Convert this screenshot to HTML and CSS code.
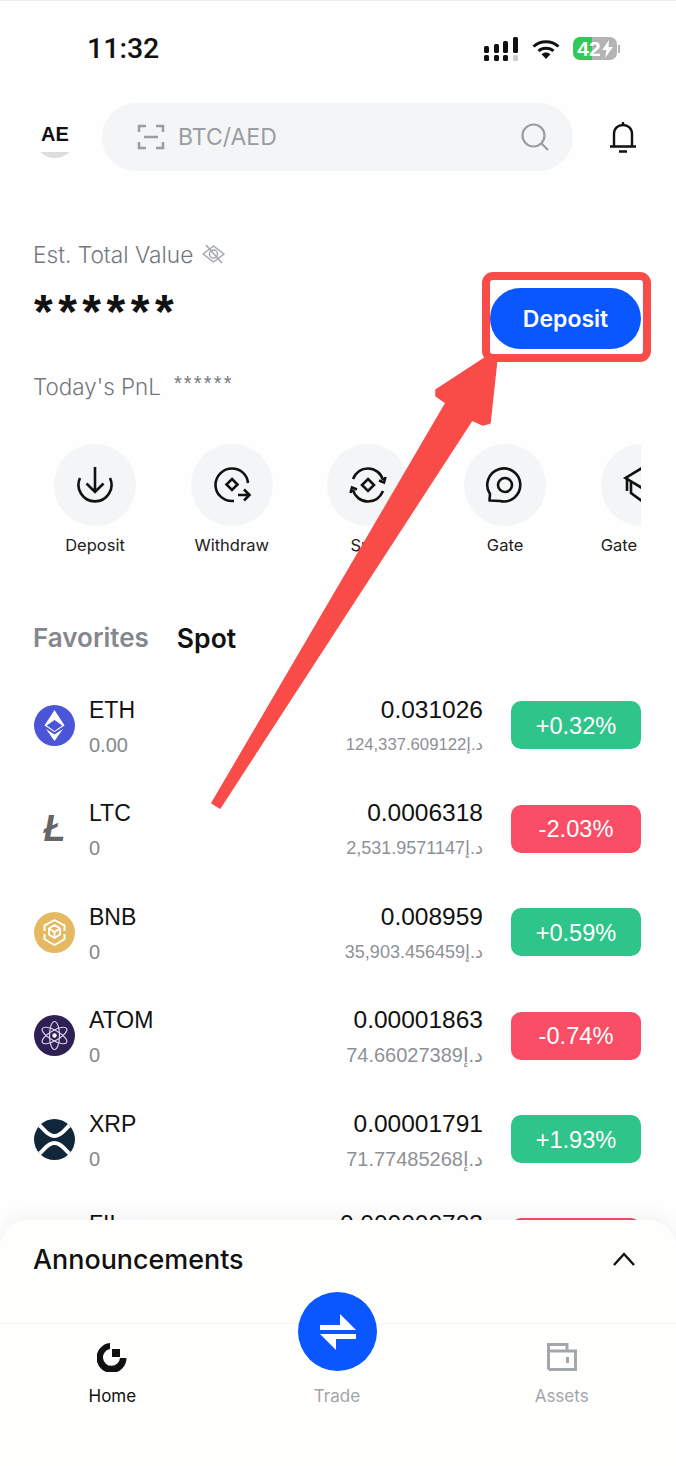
FILE: index.html
```html
<!DOCTYPE html>
<html lang="en">
<head>
    <meta charset="UTF-8">
    <meta name="viewport" content="width=device-width, initial-scale=1.0">
    <title>Home</title>
    <link rel="stylesheet" href="styles.css">
</head>
<body>
<div class="screen">

    <div class="status-bar">
        <span class="time">11:32</span>
        <div class="status-icons">
            <svg class="signal" width="36" height="24" viewBox="0 0 36 24">
                <g fill="#111">
                    <rect x="1" y="9" width="5" height="7" rx="1.5"/>
                    <rect x="11" y="7" width="5" height="9" rx="1.5"/>
                    <rect x="20" y="4" width="5" height="12" rx="1.5"/>
                    <rect x="30" y="0" width="5" height="16" rx="1.5"/>
                    <rect x="1" y="18" width="5" height="6" rx="1.5"/>
                    <rect x="11" y="18" width="5" height="6" rx="1.5"/>
                    <rect x="20" y="18" width="5" height="6" rx="1.5"/>
                </g>
                <rect x="30" y="18" width="5" height="6" rx="1.5" fill="#ccc"/>
            </svg>
            <svg class="wifi" width="28" height="20" viewBox="0 0 28 20">
                <path d="M1.5 7.5C8.5 1 19.5 1 26.5 7.5" fill="none" stroke="#111" stroke-width="3"/>
                <path d="M6.5 12C10.5 8.4 17.5 8.4 21.5 12" fill="none" stroke="#111" stroke-width="3"/>
                <path d="M9.5 15.2C12.2 12.8 15.8 12.8 18.5 15.2L14 20Z" fill="#111"/>
            </svg>
            <div class="battery">
                <span class="battery-text">42</span>
                <svg width="11" height="18" viewBox="0 0 11 18"><path d="M7 0L0 10H4.5L3 18L11 7H6.5Z" fill="#fff"/></svg>
            </div>
            <span class="battery-nub"></span>
        </div>
    </div>

    <div class="search-row">
        <div class="avatar"><span>AE</span></div>
        <div class="search-box">
            <svg width="28" height="26" viewBox="0 0 28 26" fill="none" stroke="#9a9da1" stroke-width="2.5">
                <path d="M9 2H2V8M19 2H26V8M9 24H2V18M19 24H26V18M7 13H21"/>
            </svg>
            <span class="search-text">BTC/AED</span>
            <svg class="search-icon" width="28" height="28" viewBox="0 0 28 28" fill="none" stroke="#9a9da1" stroke-width="2.2">
                <circle cx="12.5" cy="12.5" r="11"/>
                <path d="M20.5 20.5L27 27"/>
            </svg>
        </div>
        <svg class="bell" width="28" height="32" viewBox="0 0 28 32" fill="none" stroke="#111" stroke-width="2.4">
            <path d="M14 1V4M5 25V13C5 7.5 9 4 14 4S23 7.5 23 13V25M1 25.5H27M10 30.5H18"/>
        </svg>
    </div>

    <div class="summary">
        <div class="summary-label">
            Est. Total Value
            <svg width="23" height="20" viewBox="0 0 23 20" fill="none" stroke="#a3a6aa" stroke-width="1.5">
                <path d="M1 10L11.500 2L22 10L11.500 18Z" stroke-linejoin="round"/>
                <circle cx="11.5" cy="10" r="4"/>
                <path d="M4 1L20 19"/>
            </svg>
        </div>
        <div class="summary-row">
            <span class="summary-value">******</span>
            <button type="button" class="deposit-button">Deposit</button>
        </div>
        <div class="pnl">
            <span>Today's PnL</span>
            <span class="pnl-value">******</span>
        </div>
    </div>

    <div class="actions">
        <div class="action">
            <div class="action-circle">
                <svg width="40" height="40" viewBox="0 0 40 40" fill="none" stroke="#111" stroke-width="2.6">
                    <path d="M5 13A16.500 16.500 0 1 0 35 13"/>
                    <path d="M20 2V27M11.500 18.500L20 27L28.500 18.500"/>
                </svg>
            </div>
            <span class="action-label">Deposit</span>
        </div>
        <div class="action">
            <div class="action-circle">
                <svg width="40" height="40" viewBox="0 0 40 40" fill="none" stroke="#111" stroke-width="2.6">
                    <path d="M36 18C35 9 28 3.500 20 3.500C11 3.500 3.500 11 3.500 20S11 36 20 36H22"/>
                    <path d="M20 14L25.500 19.500L20 25L14.500 19.500Z"/>
                    <path d="M26 30H37M32 24.500L37.500 30L32 35.500"/>
                </svg>
            </div>
            <span class="action-label">Withdraw</span>
        </div>
        <div class="action">
            <div class="action-circle">
                <svg width="40" height="40" viewBox="0 0 40 40" fill="none" stroke="#111" stroke-width="2.6">
                    <path d="M5 14C8 7 14 3.500 20 3.500C27 3.500 33 8 35 15M31 15.500L36 17.500L37.500 12"/>
                    <path d="M35 26C32 33 26 36.500 20 36.500C13 36.500 7 32 5 25M9 24.500L4 22.500L2.500 28"/>
                    <path d="M20 14L26 20L20 26L14 20Z"/>
                </svg>
            </div>
            <span class="action-label">Spot</span>
        </div>
        <div class="action">
            <div class="action-circle">
                <svg width="40" height="40" viewBox="0 0 40 40" fill="none" stroke="#111" stroke-width="2.6">
                    <path d="M5 29A16.500 16.500 0 1 1 15 36L4.500 35.500Z" stroke-linejoin="round"/>
                    <circle cx="20" cy="20" r="7"/>
                </svg>
            </div>
            <span class="action-label">Gate</span>
        </div>
        <div class="action action-cut">
            <div class="action-circle">
                <svg width="40" height="40" viewBox="0 0 40 40" fill="none" stroke="#111" stroke-width="2.6">
                    <path d="M20 3L3.500 13L20 23L36.500 13Z"/>
                    <path d="M5 12V26M9 17V28L20 36L31 28V17"/>
                </svg>
            </div>
            <span class="action-label">Gate</span>
        </div>
    </div>

    <div class="tabs">
        <span class="tab">Favorites</span>
        <span class="tab tab-active">Spot</span>
    </div>

    <div class="market-list">
        <div class="market-row">
            <svg class="coin" width="41" height="41" viewBox="0 0 41 41">
                <circle cx="20.500" cy="20.500" r="20.500" fill="#4a55d8"/>
                <path d="M20.500 5L30.500 20.500L20.500 27L10.500 20.500Z" fill="#fff"/>
                <path d="M20.500 29.500L29 24L20.500 36L12 24Z" fill="#fff"/>
                <path d="M20.500 14.500L29 20.500L20.500 26.500L12 20.500Z" fill="#4a55d8" stroke="#fff" stroke-width="1"/>
            </svg>
            <div class="coin-col">
                <span class="coin-name">ETH</span>
                <span class="coin-sub">0.00</span>
            </div>
            <div class="price-col">
                <span class="price">0.031026</span>
                <span class="price-sub price-sub-small">124,337.609122د.إ</span>
            </div>
            <span class="change up">+0.32%</span>
        </div>
        <div class="market-row">
            <span class="coin coin-ltc">Ł</span>
            <div class="coin-col">
                <span class="coin-name">LTC</span>
                <span class="coin-sub">0</span>
            </div>
            <div class="price-col">
                <span class="price">0.0006318</span>
                <span class="price-sub">2,531.9571147د.إ</span>
            </div>
            <span class="change down">-2.03%</span>
        </div>
        <div class="market-row">
            <svg class="coin" width="41" height="41" viewBox="0 0 41 41">
                <circle cx="20.500" cy="20.500" r="20.500" fill="#e5b961"/>
                <g fill="none" stroke="#fff" stroke-width="2" stroke-linejoin="round">
                    <path d="M20.500 8L25 10.500L30.500 13.500V19M20.500 8L16 10.500L10.500 13.500V19"/>
                    <path d="M20.500 13L26 16.500V22.500L20.500 26L15 22.500V16.500Z"/>
                    <path d="M15 16.500L20.500 20L26 16.500M20.500 20V26"/>
                    <path d="M10.500 22V27L16 30.500L20.500 33L25 30.500L30.500 27V22"/>
                </g>
            </svg>
            <div class="coin-col">
                <span class="coin-name">BNB</span>
                <span class="coin-sub">0</span>
            </div>
            <div class="price-col">
                <span class="price">0.008959</span>
                <span class="price-sub">35,903.456459د.إ</span>
            </div>
            <span class="change up">+0.59%</span>
        </div>
        <div class="market-row">
            <svg class="coin" width="41" height="41" viewBox="0 0 41 41">
                <circle cx="20.500" cy="20.500" r="20.500" fill="#2e1f55"/>
                <g fill="none" stroke="#d9d2ea" stroke-width="1.200">
                    <ellipse cx="20.500" cy="20.500" rx="5" ry="14"/>
                    <ellipse cx="20.500" cy="20.500" rx="5" ry="14" transform="rotate(60 20.500 20.500)"/>
                    <ellipse cx="20.500" cy="20.500" rx="5" ry="14" transform="rotate(120 20.500 20.500)"/>
                </g>
                <circle cx="20.500" cy="20.500" r="2.200" fill="#fff"/>
            </svg>
            <div class="coin-col">
                <span class="coin-name">ATOM</span>
                <span class="coin-sub">0</span>
            </div>
            <div class="price-col">
                <span class="price">0.00001863</span>
                <span class="price-sub price-sub-large">74.66027389د.إ</span>
            </div>
            <span class="change down">-0.74%</span>
        </div>
        <div class="market-row">
            <svg class="coin" width="41" height="41" viewBox="0 0 41 41">
                <circle cx="20.500" cy="20.500" r="20.500" fill="#12263a"/>
                <g fill="none" stroke="#fff" stroke-width="4">
                    <path d="M5.500 6.500C10 9.500 13 17 20.500 17S31 9.500 35.500 6.500"/>
                    <path d="M5.500 34.500C10 31.500 13 24 20.500 24S31 31.500 35.500 34.500"/>
                </g>
            </svg>
            <div class="coin-col">
                <span class="coin-name">XRP</span>
                <span class="coin-sub">0</span>
            </div>
            <div class="price-col">
                <span class="price">0.00001791</span>
                <span class="price-sub price-sub-large">71.77485268د.إ</span>
            </div>
            <span class="change up">+1.93%</span>
        </div>
        <div class="market-row market-row-cut">
            <span class="coin"></span>
            <div class="coin-col">
                <span class="coin-name">FIL</span>
            </div>
            <div class="price-col">
                <span class="price">0.000000703</span>
            </div>
            <span class="change down"></span>
        </div>
    </div>

    <div class="bottom-sheet">
        <div class="sheet-header">
            <span class="sheet-title">Announcements</span>
            <svg width="24" height="14" viewBox="0 0 24 14" fill="none" stroke="#111" stroke-width="2.400">
                <path d="M2 13L12 2L22 13"/>
            </svg>
        </div>
        <div class="tab-bar">
            <div class="tab-item tab-item-active">
                <svg width="30" height="30" viewBox="0 0 30 30">
                    <path d="M13 1V7A8.500 8.500 0 1 0 23 16H29.500A15 15 0 1 1 13 1Z" fill="#111"/>
                    <rect x="15" y="7" width="8" height="8" fill="#111"/>
                </svg>
                <span>Home</span>
            </div>
            <div class="tab-item">
                <span class="tab-icon-space"></span>
                <span>Trade</span>
            </div>
            <div class="tab-item">
                <svg width="30" height="28" viewBox="0 0 30 28" fill="none" stroke="#a3a6aa" stroke-width="3">
                    <path d="M1.500 26.500V1.500H20V8M1.500 8H28.500V26.500H1.500"/>
                    <path d="M20.500 14V20"/>
                </svg>
                <span>Assets</span>
            </div>
        </div>
        <div class="trade-button">
            <svg width="38" height="38" viewBox="0 0 38 38" fill="#fff">
                <path d="M21 1L37 17H1V12H21Z"/>
                <path d="M17 37L1 21H37V26H17Z"/>
            </svg>
        </div>
    </div>

    <!-- red annotation drawn over the screenshot -->
    <div class="highlight-box"></div>
    <svg class="arrow" width="676" height="1466" viewBox="0 0 676 1466">
        <path d="M212 803L220 808L472 420L483 425L490 423L497 358H485L436 390L436 396L446 403Z" fill="#f94c48" stroke="#f94c48" stroke-width="1.500" stroke-linejoin="round"/>
    </svg>

</div>
</body>
</html>
```

FILE: styles.css
```css
* {
    box-sizing: border-box;
}

body {
    margin: 0;
    background-color: #fefefe;
    font-family: Inter, "Liberation Sans", sans-serif;
}

.screen {
    position: relative;
    width: 676px;
    height: 1466px;
    overflow: hidden;
    background-color: #fefefe;
    border-top: 1px solid #eeeeee;
}

/* status bar */
.status-bar {
    display: flex;
    align-items: center;
    justify-content: space-between;
    height: 95px;
    padding: 0 56px 0 87px;
}

.time {
    font-family: Roboto, sans-serif;
    font-size: 28.500px;
    font-weight: 500;
    color: #111;
}

.status-icons {
    display: flex;
    align-items: center;
}

.signal {
    margin-right: 13px;
}

.wifi {
    margin-right: 13px;
}

.battery {
    display: flex;
    align-items: center;
    justify-content: center;
    gap: 1px;
    width: 44px;
    height: 23px;
    border-radius: 7px;
    background: linear-gradient(to right, #34c759 43%, #b3b3b3 43%);
}

.battery-text {
    font-family: "Liberation Sans", sans-serif;
    font-size: 21px;
    font-weight: 700;
    color: #fff;
}

.battery-nub {
    width: 2px;
    height: 8px;
    margin-left: 1px;
    background-color: #b3b3b3;
}

/* search */
.search-row {
    display: flex;
    align-items: center;
    height: 68px;
    margin-top: 7px;
    padding: 0 39px 0 34px;
}

.avatar {
    display: flex;
    align-items: center;
    justify-content: center;
    flex: none;
    width: 42px;
    height: 42px;
    padding-bottom: 6px;
    border-radius: 50%;
    background: linear-gradient(to bottom, #fff 86%, #dddddb 86%);
    font-family: "Liberation Sans", sans-serif;
    font-size: 20px;
    font-weight: 700;
    color: #111;
}

.search-box {
    display: flex;
    align-items: center;
    width: 471px;
    height: 68px;
    margin-left: 26px;
    padding: 0 24px 0 35px;
    border-radius: 34px;
    background-color: #f4f5f7;
}

.search-text {
    margin-left: 13px;
    font-size: 23px;
    color: #9a9da1;
    flex: 1;
}

.bell {
    margin-left: auto;
}

/* balance */
.summary {
    margin-top: 69px;
    padding: 0 35px 0 34px;
}

.summary-label {
    display: flex;
    align-items: center;
    gap: 9px;
    height: 28px;
    margin-left: -1px;
    font-size: 22.700px;
    font-weight: 300;
    color: #74787d;
}

.summary-row {
    display: flex;
    align-items: flex-start;
    justify-content: space-between;
    margin-top: 20px;
}

.summary-value {
    font-family: "Liberation Sans", sans-serif;
    font-size: 48px;
    font-weight: 700;
    line-height: 48px;
    letter-spacing: 5.500px;
    color: #111;
}

.deposit-button {
    width: 151px;
    height: 61px;
    border: none;
    border-radius: 31px;
    background-color: #0a56ff;
    font-family: Inter, sans-serif;
    font-size: 23px;
    font-weight: 600;
    color: #fff;
}

.pnl {
    display: flex;
    align-items: center;
    gap: 13px;
    height: 28px;
    margin-top: 23px;
    margin-left: -1px;
    font-size: 22.400px;
    font-weight: 300;
    color: #74787d;
}

.pnl-value {
    font-family: "Liberation Sans", sans-serif;
    font-size: 20px;
    letter-spacing: 2.200px;
    padding-bottom: 6px;
}

/* shortcuts */
.actions {
    display: flex;
    gap: 54.700px;
    width: 641px;
    margin-top: 44px;
    padding-left: 54px;
    overflow: hidden;
}

.action {
    display: flex;
    flex: none;
    flex-direction: column;
    align-items: center;
    width: 82px;
}

.action-circle {
    display: flex;
    align-items: center;
    justify-content: center;
    width: 82px;
    height: 82px;
    border-radius: 50%;
    background-color: #f4f5f7;
}

.action-label {
    margin-top: 9px;
    font-size: 16.500px;
    line-height: 20px;
    color: #222;
}

.action-cut .action-label {
    align-self: flex-start;
}

/* market tabs */
.tabs {
    display: flex;
    gap: 28px;
    margin-top: 68px;
    padding-left: 33px;
}

.tab {
    font-size: 26px;
    font-weight: 600;
    line-height: 30px;
    color: #84888c;
}

.tab-active {
    font-size: 26.500px;
    color: #111;
}

/* market rows */
.market-list {
    margin-top: 20.300px;
}

.market-row {
    display: flex;
    align-items: center;
    height: 103.500px;
    padding: 0 35px 0 34px;
    font-family: "Liberation Sans", sans-serif;
}

/* last row only peeks out above the bottom sheet */
.market-row-cut {
    align-items: flex-start;
    padding-top: 18px;
}

.market-row-cut .change {
    margin-top: 9px;
}

.coin {
    flex: none;
    width: 41px;
    height: 41px;
}

.coin-ltc {
    font-size: 36px;
    font-weight: 700;
    font-style: italic;
    line-height: 41px;
    text-align: center;
    color: #666;
}

.coin-col,
.price-col {
    display: flex;
    flex-direction: column;
    padding-top: 3.600px;
}

.market-row-cut .coin-col,
.market-row-cut .price-col {
    padding-top: 0;
}

.coin-col {
    margin-left: 14px;
}

.price-col {
    align-items: flex-end;
    margin-left: auto;
    margin-right: 28px;
}

.coin-name,
.price {
    font-size: 23px;
    line-height: 30px;
    color: #111;
}

.price {
    font-size: 24.500px;
}

.coin-sub {
    margin-top: 6px;
    font-size: 20px;
    line-height: 28px;
    color: #84888c;
}

.price-sub {
    margin-top: 6px;
    font-family: "Liberation Sans", "DejaVu Sans", sans-serif;
    font-size: 18px;
    line-height: 28px;
    color: #8e9195;
}

.price-sub-small {
    font-size: 16.700px;
}

.price-sub-large {
    font-size: 20px;
}

.change {
    display: flex;
    align-items: center;
    justify-content: center;
    flex: none;
    width: 130px;
    height: 48px;
    padding-top: 2px;
    border-radius: 10px;
    font-size: 23.600px;
    color: #fff;
}

.up {
    background-color: #2fc48a;
}

.down {
    background-color: #fa4d66;
}

/* bottom sheet */
.bottom-sheet {
    position: absolute;
    left: 0;
    right: 0;
    bottom: 0;
    height: 246px;
    padding-top: 24px;
    border-radius: 28px 28px 0 0;
    background-color: #fefefd;
    box-shadow: 0 -4px 20px rgba(0, 0, 0, 0.05);
}

.sheet-header {
    display: flex;
    align-items: center;
    justify-content: space-between;
    height: 30px;
    padding: 0 40px 0 33px;
}

.sheet-title {
    font-size: 26.900px;
    font-weight: 500;
    color: #111;
}

.tab-bar {
    display: grid;
    grid-template-columns: repeat(3, 1fr);
    margin-top: 49px;
    padding: 18px 2px 0 0;
    border-top: 1px solid #f4f4f4;
}

.tab-item {
    display: flex;
    flex-direction: column;
    align-items: center;
    font-size: 17px;
    line-height: 20px;
    color: #a3a6aa;
}

.tab-item svg,
.tab-icon-space {
    display: block;
    height: 30px;
    margin-bottom: 14px;
}

.tab-item-active {
    color: #111;
}

.trade-button {
    position: absolute;
    top: 72px;
    left: 298px;
    display: flex;
    align-items: center;
    justify-content: center;
    width: 79px;
    height: 79px;
    border-radius: 50%;
    background-color: #0a56ff;
}

/* annotation */
.highlight-box {
    position: absolute;
    top: 271px;
    left: 482px;
    width: 169px;
    height: 90px;
    border: 8px solid #f94c48;
    border-radius: 11px;
}

.arrow {
    position: absolute;
    top: -1px;
    left: 0;
}
```
